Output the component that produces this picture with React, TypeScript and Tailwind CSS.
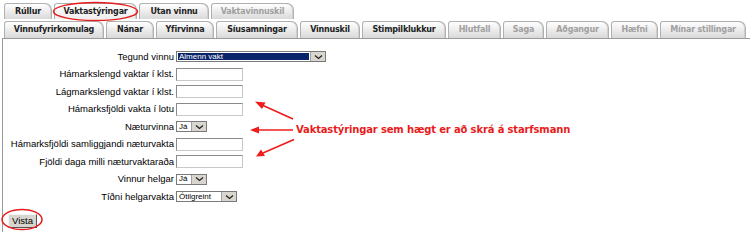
import React from "react";

type Tab = { label: string; width: string; active?: boolean; disabled?: boolean };

const topTabs: Tab[] = [
  { label: "Rúllur", width: "w-[48px]" },
  { label: "Vaktastýringar", width: "w-[83px]", active: true },
  { label: "Utan vinnu", width: "w-[70px]" },
  { label: "Vaktavinnuskil", width: "w-[83px]", disabled: true },
];

const subTabs: Tab[] = [
  { label: "Vinnufyrirkomulag", width: "w-[100px]" },
  { label: "Nánar", width: "w-[48px]" },
  { label: "Yfirvinna", width: "w-[58px]" },
  { label: "Síusamningar", width: "w-[82px]" },
  { label: "Vinnuskil", width: "w-[60px]" },
  { label: "Stimpilklukkur", width: "w-[84px]" },
  { label: "Hlutfall", width: "w-[53px]", disabled: true },
  { label: "Saga", width: "w-[41px]", disabled: true },
  { label: "Aðgangur", width: "w-[63px]", disabled: true },
  { label: "Hæfni", width: "w-[47px]", disabled: true },
  { label: "Mínar stillingar", width: "w-[86px]", disabled: true },
];

function TabButton({ tab, height }: { tab: Tab; height: string }) {
  return (
    <div
      className={`${tab.width} ${height} flex items-center justify-center border border-b-0 border-[#b0b0b0] rounded-tl-[3px] rounded-tr-[7px] shadow-[inset_-1px_0_0_#d0d0d0] ${
        tab.active ? "bg-gradient-to-b from-white to-[#eeeeee]" : "bg-gradient-to-b from-white to-[#d9d9d9]"
      }`}
    >
      <span
        className={`font-['DejaVu_Sans',Verdana,sans-serif] font-bold text-[8px] tracking-[-0.2px] ${
          tab.disabled ? "text-[#a0a0a0]" : "text-[#222]"
        }`}
      >
        {tab.label}
      </span>
    </div>
  );
}

function TextBox() {
  return (
    <div className="w-[67px] h-[13px] bg-white border border-[#8a8a8a] border-r-[#c8c8c8] border-b-[#c8c8c8]" />
  );
}

function Chevron() {
  return (
    <svg width="9" height="6" viewBox="0 0 9 6">
      <path d="M1 1.5 L4.5 4.5 L8 1.5" fill="none" stroke="#222" strokeWidth="1.3" />
    </svg>
  );
}

function Select({ value, width, highlighted }: { value: string; width: string; highlighted?: boolean }) {
  return (
    <div className={`${width} h-[11px] flex border border-[#7a7a7a] bg-white`}>
      <div className="flex-1 p-[1px] flex">
        <div
          className={`flex-1 flex items-center pl-[1px] text-[8px] leading-none ${
            highlighted ? "bg-[#0a246a] text-white" : "text-black"
          }`}
        >
          {value}
        </div>
      </div>
      <div className="w-[15px] flex items-center justify-center bg-[#d9d6cf] border-l border-[#a0a0a0]">
        <Chevron />
      </div>
    </div>
  );
}

type Row = { label: string; field: React.ReactNode };

const rows: Row[] = [
  { label: "Tegund vinnu", field: <Select value="Almenn vakt" width="w-[150px]" highlighted /> },
  { label: "Hámarkslengd vaktar í klst.", field: <TextBox /> },
  { label: "Lágmarkslengd vaktar í klst.", field: <TextBox /> },
  { label: "Hámarksfjöldi vakta í lotu", field: <TextBox /> },
  { label: "Næturvinna", field: <Select value="Já" width="w-[31px]" /> },
  { label: "Hámarksfjöldi samliggjandi næturvakta", field: <TextBox /> },
  { label: "Fjöldi daga milli næturvaktaraða", field: <TextBox /> },
  { label: "Vinnur helgar", field: <Select value="Já" width="w-[31px]" /> },
  { label: "Tíðni helgarvakta", field: <Select value="Ótilgreint" width="w-[61px]" /> },
];

export default function App() {
  return (
    <div className="relative w-[750px] h-[232px] bg-white overflow-hidden font-['Liberation_Sans',Arial,sans-serif]">
      {/* Main tabs */}
      <div className="flex gap-[2px] pl-[4px] pt-[3px]">
        {topTabs.map((t) => (
          <TabButton key={t.label} tab={t} height="h-[16px]" />
        ))}
      </div>
      {/* Sub tabs */}
      <div className="flex gap-[2px] pl-[4px] pt-[2px]">
        {subTabs.map((t) => (
          <TabButton key={t.label} tab={t} height="h-[17px]" />
        ))}
      </div>

      {/* Form panel */}
      <div className="ml-[2px] h-[200px] border-l border-t border-[#9a9a9a] pt-[9px]">
        <div className="grid grid-cols-[171px_auto] gap-x-[2px] auto-rows-[17.5px] items-center">
          {rows.map((r) => (
            <React.Fragment key={r.label}>
              <div className="text-right text-[9.5px] text-black whitespace-nowrap">{r.label}</div>
              <div>{r.field}</div>
            </React.Fragment>
          ))}
        </div>
        <div className="mt-[8px] ml-[5px]">
          <button className="h-[14px] w-[29px] flex items-center justify-center bg-[#d8d5ce] border border-t-[#f4f4f4] border-l-[#f4f4f4] border-r-[#555] border-b-[#555] text-[9.5px] text-black leading-none">
            Vista
          </button>
        </div>
      </div>

      {/* Annotation */}
      <div className="absolute left-[296px] top-[122px] text-[#e81c1c] font-['DejaVu_Sans',Verdana,sans-serif] font-bold text-[10px] tracking-[-0.15px] whitespace-nowrap">
        Vaktastýringar sem hægt er að skrá á starfsmann
      </div>
      <svg className="absolute left-0 top-0 pointer-events-none" width="750" height="232">
        <ellipse cx="95.5" cy="11.5" rx="42" ry="9" fill="none" stroke="#e51c1c" strokeWidth="1.5" />
        <ellipse cx="22" cy="219.5" rx="20" ry="10" fill="none" stroke="#e51c1c" strokeWidth="1.5" />
        <g stroke="#ee1c1c" strokeWidth="1.6" fill="#ee1c1c">
          <line x1="293" y1="119" x2="262" y2="105" />
          <polygon points="255,101.5 265.5,102.5 262,109" stroke="none" />
          <line x1="293" y1="130" x2="258" y2="130" />
          <polygon points="250,130 259,126.5 259,133.5" stroke="none" />
          <line x1="294" y1="139.5" x2="263" y2="153" />
          <polygon points="256,156.5 261,149.5 265,156" stroke="none" />
        </g>
      </svg>
    </div>
  );
}
